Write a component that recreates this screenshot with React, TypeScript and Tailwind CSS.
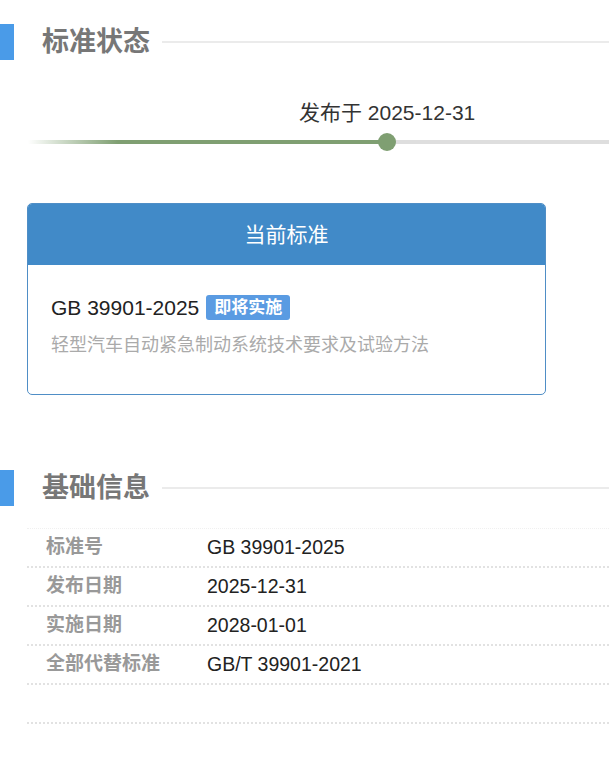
const rows = [
  { label: '标准号', value: 'GB 39901-2025' },
  { label: '发布日期', value: '2025-12-31' },
  { label: '实施日期', value: '2028-01-01' },
  { label: '全部代替标准', value: 'GB/T 39901-2021' },
  { label: '', value: '' },
];

function SectionTitle({ title }: { title: string }) {
  return (
    <div className="flex items-center h-[36px]">
      <div className="w-[14px] h-[36px] bg-[#4a9be8]" />
      <h2 className="ml-[28px] text-[27px] font-bold text-[#777] leading-none">{title}</h2>
      <div className="flex-1 ml-[12px] h-[2px] bg-[#ebebeb]" />
    </div>
  );
}

export default function App() {
  return (
    <div
      className="w-[609px] h-[759px] bg-white overflow-hidden"
      style={{ fontFamily: '"Liberation Sans", Arial, "Noto Sans CJK SC", sans-serif' }}
    >
      <div className="pt-[24px]">
        <SectionTitle title="标准状态" />
      </div>

      <div className="mt-[40px] relative h-[50px]">
        <div className="absolute left-[299px] top-[1px] text-[21px] text-[#333] leading-[24px]">发布于 2025-12-31</div>
        <div className="absolute left-[28px] right-0 top-[40px] h-[4px] bg-[#dedede]" />
        <div className="absolute left-[28px] w-[359px] top-[40px] h-[4px] bg-gradient-to-r from-[#ffffff] via-[#7f9f72] via-[25%] to-[#7f9f72]" />
        <div className="absolute left-[378px] top-[33px] w-[18px] h-[18px] rounded-full bg-[#7f9f72]" />
      </div>

      <div className="mt-[53px] ml-[27px] w-[519px] h-[192px] rounded-[5px] border border-[#4f8ec6] overflow-hidden">
        <div className="h-[61px] bg-[#418ac8] flex items-center justify-center text-white text-[21px]">当前标准</div>
        <div className="px-[23px] pt-[27px]">
          <div className="flex items-center">
            <span className="text-[21px] text-[#222]">GB 39901-2025</span>
            <span className="ml-[7px] px-[8px] h-[25px] flex items-center rounded-[3px] bg-[#5a9be2] text-white text-[17px] font-bold">即将实施</span>
          </div>
          <div className="mt-[8px] text-[18px] text-[#aaa]">轻型汽车自动紧急制动系统技术要求及试验方法</div>
        </div>
      </div>

      <div className="mt-[75px]">
        <SectionTitle title="基础信息" />
      </div>

      <div className="mt-[22px] ml-[27px] border-t border-dotted border-[#f0f0f0]">
        {rows.map((r, i) => (
          <div key={i} className="flex items-center h-[39px] border-b-2 border-dotted border-[#e2e2e2]">
            <span className="w-[180px] pl-[19px] text-[19px] font-bold text-[#999]">{r.label}</span>
            <span className="text-[19.5px] text-[#222]">{r.value}</span>
          </div>
        ))}
      </div>
    </div>
  );
}
